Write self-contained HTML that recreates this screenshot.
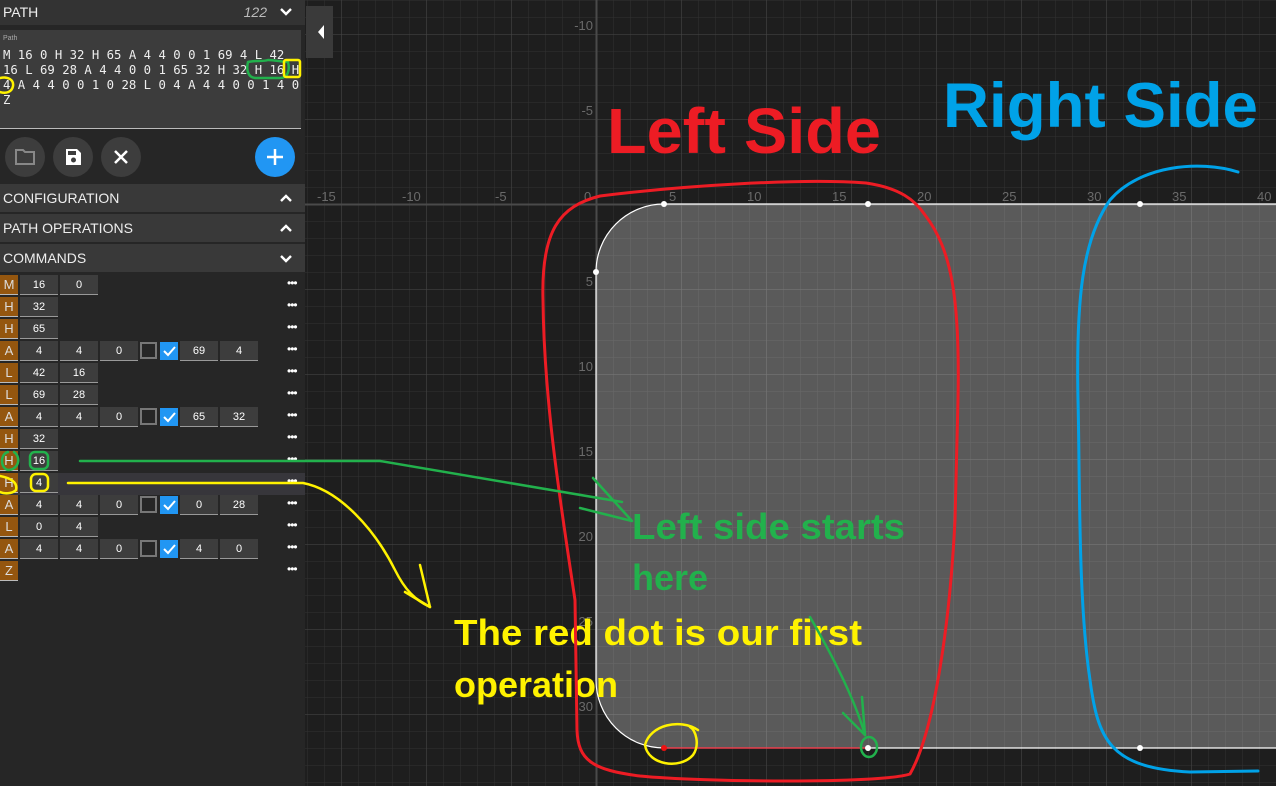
<!DOCTYPE html>
<html><head><meta charset="utf-8">
<style>
*{box-sizing:border-box;margin:0;padding:0}
body{width:1276px;height:786px;overflow:hidden;background:#1e1e1e;font-family:"Liberation Sans",sans-serif;position:relative;color:#ddd}
.abs{position:absolute}
#side{left:0;top:0;width:305px;height:786px;background:#262626}
.hdr{position:absolute;left:0;width:305px;height:28px;background:#393939;color:#eee;font-size:14px;line-height:28px;padding-left:3px}
.chev{position:absolute;right:12px;top:0}
.row{position:absolute;left:0;width:305px;height:22px}
.t{position:absolute;left:0;top:0;width:18px;height:20px;background:#94560f;color:#ddd;font-size:13px;line-height:20px;text-align:center;border-bottom:1px solid #bbb}
.in{position:absolute;top:0;width:38px;height:20px;background:#3d3d3d;color:#fff;font-size:11px;line-height:20px;text-align:center;border-bottom:1px solid #999}
.cb{position:absolute;top:1px;width:17px;height:17px;border:2px solid #777}
.ck{position:absolute;top:1px;width:18px;height:18px;background:#2196f3}
.dots{position:absolute;left:287px;top:3px;color:#fff;font-size:12px;letter-spacing:-1px;line-height:10px}
.btn{position:absolute;top:137px;width:40px;height:40px;border-radius:50%;background:#3d3d3d}
</style></head><body>

<svg class="abs" style="left:305px;top:0" width="971" height="786" viewBox="305 0 971 786">
<defs>
<pattern id="mn" x="1" y="0" width="17" height="17" patternUnits="userSpaceOnUse"><path d="M0 0H17M0 0V17" stroke="#323232" stroke-width="1" fill="none"/></pattern>
<pattern id="mj" x="86" y="34" width="85" height="85" patternUnits="userSpaceOnUse"><path d="M0 0H85M0 0V85" stroke="#424242" stroke-width="1.3" fill="none"/></pattern>
</defs>
<rect x="305" y="0" width="971" height="786" fill="#1e1e1e"/>
<rect x="305" y="0" width="971" height="786" fill="url(#mn)"/>
<rect x="305" y="0" width="971" height="786" fill="url(#mj)"/>
<line x1="305" y1="204.5" x2="1276" y2="204.5" stroke="#4a4a4a" stroke-width="2"/>
<line x1="596.5" y1="0" x2="596.5" y2="786" stroke="#4a4a4a" stroke-width="2"/>
<path d="M664 204 H1290 V748 H664 A68 68 0 0 1 596 680 V272 A68 68 0 0 1 664 204Z" fill="rgba(255,255,255,0.27)" stroke="#fff" stroke-width="1.2"/>
<line x1="664" y1="748" x2="868" y2="748" stroke="#e23" stroke-width="1.2"/>
<g fill="#fff"><circle cx="664" cy="204" r="3"/><circle cx="868" cy="204" r="3"/><circle cx="1140" cy="204" r="3"/><circle cx="596" cy="272" r="3"/><circle cx="868" cy="748" r="3"/><circle cx="1140" cy="748" r="3"/></g>
<circle cx="664" cy="748" r="3" fill="#e11"/>
<g fill="#6a6a6a" font-size="13" font-family="Liberation Sans,sans-serif">
<text x="317" y="201">-15</text><text x="402" y="201">-10</text><text x="495" y="201">-5</text><text x="584" y="201">0</text>
<text x="669" y="201">5</text><text x="747" y="201">10</text><text x="832" y="201">15</text><text x="917" y="201">20</text>
<text x="1002" y="201">25</text><text x="1087" y="201">30</text><text x="1172" y="201">35</text><text x="1257" y="201">40</text>
<g text-anchor="end"><text x="593" y="30">-10</text><text x="593" y="115">-5</text><text x="593" y="286">5</text><text x="593" y="371">10</text>
<text x="593" y="456">15</text><text x="593" y="541">20</text><text x="593" y="626">25</text><text x="593" y="711">30</text></g>
</g>
</svg>

<div class="abs" style="left:306px;top:6px;width:27px;height:52px;background:#3a3a3a"><svg width="27" height="52"><path d="M20 24 L14 31 L20 38Z" transform="translate(-2,-5)" fill="#fff"/></svg></div>

<div id="side" class="abs">
<div class="hdr" style="top:0;height:25px;line-height:25px;background:#333">PATH<span style="position:absolute;right:38px;font-style:italic;color:#bbb;font-size:14px">122</span><span class="chev" style="top:-1px">
<svg width="14" height="24"><path d="M2 10 L7 15 L12 10" stroke="#fff" stroke-width="2.4" fill="none"/></svg></span></div>
<div class="abs" style="left:0;top:30px;width:301px;height:99px;background:#3c3c3c;border-bottom:1px solid #bbb">
<div style="position:absolute;left:3px;top:5px;font-size:7px;color:#aaa">Path</div>
<div style="position:absolute;left:3px;top:18px;width:300px;font-family:'DejaVu Sans Mono','Liberation Mono',monospace;font-size:12.3px;line-height:15px;color:#eee;white-space:nowrap">M 16 0 H 32 H 65 A 4 4 0 0 1 69 4 L 42<br>16 L 69 28 A 4 4 0 0 1 65 32 H 32 H 16 H<br>4 A 4 4 0 0 1 0 28 L 0 4 A 4 4 0 0 1 4 0<br>Z</div>
</div>
<div class="btn" style="left:5px"><svg width="40" height="40"><path d="M11 13 H18 L20 15 H29 V27 H11Z" fill="none" stroke="#888" stroke-width="2"/></svg></div>
<div class="btn" style="left:53px"><svg width="40" height="40"><path d="M13 12 H24 L28 16 V28 H13Z" fill="#fff"/><rect x="15" y="14" width="8" height="4" fill="#3d3d3d"/><circle cx="20.5" cy="23" r="2.5" fill="#3d3d3d"/></svg></div>
<div class="btn" style="left:101px"><svg width="40" height="40"><path d="M14 14 L26 26 M26 14 L14 26" stroke="#fff" stroke-width="2.5"/></svg></div>
<div class="btn" style="left:255px;background:#2196f3"><svg width="40" height="40"><path d="M20 12 V28 M12 20 H28" stroke="#fff" stroke-width="2.5"/></svg></div>

<div class="hdr" style="top:184px">CONFIGURATION<span class="chev"><svg width="14" height="28"><path d="M2 17 L7 12 L12 17" stroke="#fff" stroke-width="2.4" fill="none"/></svg></span></div>
<div class="hdr" style="top:214px">PATH OPERATIONS<span class="chev"><svg width="14" height="28"><path d="M2 17 L7 12 L12 17" stroke="#fff" stroke-width="2.4" fill="none"/></svg></span></div>
<div class="hdr" style="top:244px">COMMANDS<span class="chev"><svg width="14" height="28"><path d="M2 12 L7 17 L12 12" stroke="#fff" stroke-width="2.4" fill="none"/></svg></span></div>

<div class="row" style="top:275px"><div class="t">M</div><div class="in" style="left:20px">16</div><div class="in" style="left:60px">0</div><div class="dots">•••</div></div>
<div class="row" style="top:297px"><div class="t">H</div><div class="in" style="left:20px">32</div><div class="dots">•••</div></div>
<div class="row" style="top:319px"><div class="t">H</div><div class="in" style="left:20px">65</div><div class="dots">•••</div></div>
<div class="row" style="top:341px"><div class="t">A</div><div class="in" style="left:20px">4</div><div class="in" style="left:60px">4</div><div class="in" style="left:100px">0</div><div class="cb" style="left:140px"></div><div class="ck" style="left:160px"><svg width="18" height="18"><path d="M4 9 L8 13 L15 5" stroke="#fff" stroke-width="2" fill="none"/></svg></div><div class="in" style="left:180px">69</div><div class="in" style="left:220px">4</div><div class="dots">•••</div></div>
<div class="row" style="top:363px"><div class="t">L</div><div class="in" style="left:20px">42</div><div class="in" style="left:60px">16</div><div class="dots">•••</div></div>
<div class="row" style="top:385px"><div class="t">L</div><div class="in" style="left:20px">69</div><div class="in" style="left:60px">28</div><div class="dots">•••</div></div>
<div class="row" style="top:407px"><div class="t">A</div><div class="in" style="left:20px">4</div><div class="in" style="left:60px">4</div><div class="in" style="left:100px">0</div><div class="cb" style="left:140px"></div><div class="ck" style="left:160px"><svg width="18" height="18"><path d="M4 9 L8 13 L15 5" stroke="#fff" stroke-width="2" fill="none"/></svg></div><div class="in" style="left:180px">65</div><div class="in" style="left:220px">32</div><div class="dots">•••</div></div>
<div class="row" style="top:429px"><div class="t">H</div><div class="in" style="left:20px">32</div><div class="dots">•••</div></div>
<div class="row" style="top:451px"><div class="t">H</div><div class="in" style="left:20px">16</div><div class="dots">•••</div></div>
<div class="row" style="top:473px;background:#37363b"><div class="t">H</div><div class="in" style="left:20px">4</div><div class="dots">•••</div></div>
<div class="row" style="top:495px"><div class="t">A</div><div class="in" style="left:20px">4</div><div class="in" style="left:60px">4</div><div class="in" style="left:100px">0</div><div class="cb" style="left:140px"></div><div class="ck" style="left:160px"><svg width="18" height="18"><path d="M4 9 L8 13 L15 5" stroke="#fff" stroke-width="2" fill="none"/></svg></div><div class="in" style="left:180px">0</div><div class="in" style="left:220px">28</div><div class="dots">•••</div></div>
<div class="row" style="top:517px"><div class="t">L</div><div class="in" style="left:20px">0</div><div class="in" style="left:60px">4</div><div class="dots">•••</div></div>
<div class="row" style="top:539px"><div class="t">A</div><div class="in" style="left:20px">4</div><div class="in" style="left:60px">4</div><div class="in" style="left:100px">0</div><div class="cb" style="left:140px"></div><div class="ck" style="left:160px"><svg width="18" height="18"><path d="M4 9 L8 13 L15 5" stroke="#fff" stroke-width="2" fill="none"/></svg></div><div class="in" style="left:180px">4</div><div class="in" style="left:220px">0</div><div class="dots">•••</div></div>
<div class="row" style="top:561px"><div class="t">Z</div><div class="dots">•••</div></div>
</div>

<svg class="abs" style="left:0;top:0" width="1276" height="786">
<g font-family="Liberation Sans,DejaVu Sans,sans-serif" font-weight="bold">
<text x="607" y="153" font-size="64" fill="#ed1c24" textLength="274" lengthAdjust="spacingAndGlyphs">Left Side</text>
<text x="943" y="127" font-size="63" fill="#00a2e8" textLength="315" lengthAdjust="spacingAndGlyphs">Right Side</text>
<text x="632" y="539" font-size="36" fill="#22b14c" textLength="273" lengthAdjust="spacingAndGlyphs">Left side starts</text>
<text x="632" y="590" font-size="36" fill="#22b14c">here</text>
<text x="454" y="645" font-size="36" fill="#fff200" textLength="408" lengthAdjust="spacingAndGlyphs">The red dot is our first</text>
<text x="454" y="697" font-size="36" fill="#fff200">operation</text>
</g>
<g fill="none" stroke-width="3" stroke-linecap="round" stroke-linejoin="round">
<path d="M866 183 C900 188 915 200 925 215 C952 250 960 300 958 400 L955 520 C950 620 935 730 910 774 C880 784 700 782 640 776 C592 770 578 760 577 730 L575 600 C560 500 544 400 543 300 C541 230 560 206 600 196 C680 186 800 178 866 183" stroke="#ed1c24"/>
<path d="M1238 172 C1200 160 1140 165 1110 200 C1082 240 1076 300 1078 400 C1080 480 1078 600 1090 680 C1098 740 1110 768 1190 772 L1258 771" stroke="#00a2e8"/>
<g stroke="#22b14c" stroke-width="2.5">
<path d="M80 461 L380 461 L622 502"/><path d="M593 478 L632 521 L580 508"/>
<path d="M810 617 C835 660 855 700 865 735"/><path d="M843 713 L865 735 L862 697"/>
<ellipse cx="869" cy="747" rx="8" ry="10"/>
<path d="M8 452 C0 454 0 468 8 470 C18 470 22 458 14 452"/>
<rect x="30" y="452" width="18" height="17" rx="5"/>
<path d="M248 62 C255 60 262 62 268 60 C275 60 282 62 288 62 C290 70 288 78 280 78 H256 C248 78 246 70 248 62"/>
</g>
<g stroke="#fff200" stroke-width="2.5">
<path d="M68 483 L303 483 C340 490 375 530 395 570 C405 590 415 600 430 607"/><path d="M405 592 L430 607 L420 565"/>
<path d="M698 730 C680 718 650 725 645 745 C648 765 680 770 693 755 C700 745 696 730 690 727"/>
<path d="M0 476 C10 478 18 482 16 490 C12 494 4 494 0 492"/>
<rect x="31" y="474" width="17" height="17" rx="5"/>
<rect x="284" y="60" width="16" height="17" rx="2"/>
<path d="M0 78 C8 76 14 80 13 86 C12 92 6 94 0 92"/>
</g>
</g>
</svg>
</body></html>
